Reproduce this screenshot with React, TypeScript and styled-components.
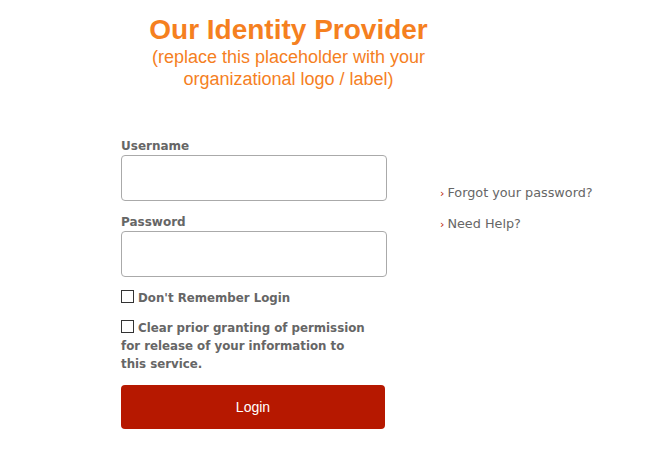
import React from "react";
import styled, { createGlobalStyle } from "styled-components";

const Global = createGlobalStyle`
  html, body { margin: 0; padding: 0; background: #fff; }
  body { font-family: "DejaVu Sans", Verdana, sans-serif; color: #666; }
  * { box-sizing: border-box; }
`;

const Page = styled.div`
  width: 660px;
  height: 462px;
  padding-top: 14px;
`;

const Header = styled.header`
  width: 335px;
  margin-left: 121px;
  text-align: center;
  font-family: "Liberation Sans", Arial, sans-serif;
  color: #f5801f;
`;

const Title = styled.h1`
  margin: 0;
  font-size: 28px;
  line-height: 32px;
  font-weight: bold;
`;

const Subtitle = styled.p`
  margin: 0;
  font-size: 18px;
  line-height: 22px;
`;

const Content = styled.main`
  display: flex;
  padding-left: 121px;
  margin-top: 47px;
`;

const Form = styled.form`
  width: 266px;
  display: flex;
  flex-direction: column;
`;

const Field = styled.div`
  display: flex;
  flex-direction: column;
  margin-bottom: 12px;
`;

const Label = styled.label`
  font-size: 12px;
  font-weight: bold;
  line-height: 18px;
  color: #666;
`;

const Input = styled.input`
  width: 266px;
  height: 46px;
  border: 1px solid #aaa;
  border-radius: 4px;
  background: #fff;
  padding: 0 8px;
  font-size: 14px;
`;

const CheckRow = styled.label<{ $narrow?: boolean }>`
  display: block;
  width: ${(p) => (p.$narrow ? "248px" : "266px")};
  font-size: 11.8px;
  font-weight: bold;
  line-height: 18px;
  color: #666;
  margin-bottom: 12px;
`;

const Box = styled.span`
  display: inline-block;
  width: 13px;
  height: 13px;
  border: 1px solid #333;
  background: #fff;
  vertical-align: -1px;
  margin-right: 4px;
`;

const Button = styled.button`
  margin-top: 0;
  width: 264px;
  height: 44px;
  border: none;
  border-radius: 4px;
  background: #b61800;
  color: #fff;
  font-family: "Liberation Sans", Arial, sans-serif;
  font-size: 14px;
  cursor: pointer;
`;

const Side = styled.ul`
  list-style: none;
  margin: 47px 0 0 53px;
  padding: 0;
  display: flex;
  flex-direction: column;
  gap: 12px;
`;

const SideItem = styled.li`
  font-size: 12.8px;
  line-height: 18px;
  color: #666;
`;

const Chevron = styled.span`
  color: #b61800;
  font-size: 11px;
  margin-right: 3px;
`;

export default function App() {
  return (
    <Page>
      <Global />
      <Header>
        <Title>Our Identity Provider</Title>
        <Subtitle>
          (replace this placeholder with your
          <br />
          organizational logo / label)
        </Subtitle>
      </Header>
      <Content>
        <Form onSubmit={(e) => e.preventDefault()}>
          <Field>
            <Label htmlFor="username">Username</Label>
            <Input id="username" type="text" />
          </Field>
          <Field>
            <Label htmlFor="password">Password</Label>
            <Input id="password" type="password" />
          </Field>
          <CheckRow>
            <Box />
            Don't Remember Login
          </CheckRow>
          <CheckRow $narrow>
            <Box />
            Clear prior granting of permission for release of your information to this service.
          </CheckRow>
          <Button type="submit">Login</Button>
        </Form>
        <Side>
          <SideItem>
            <Chevron>›</Chevron>Forgot your password?
          </SideItem>
          <SideItem>
            <Chevron>›</Chevron>Need Help?
          </SideItem>
        </Side>
      </Content>
    </Page>
  );
}
